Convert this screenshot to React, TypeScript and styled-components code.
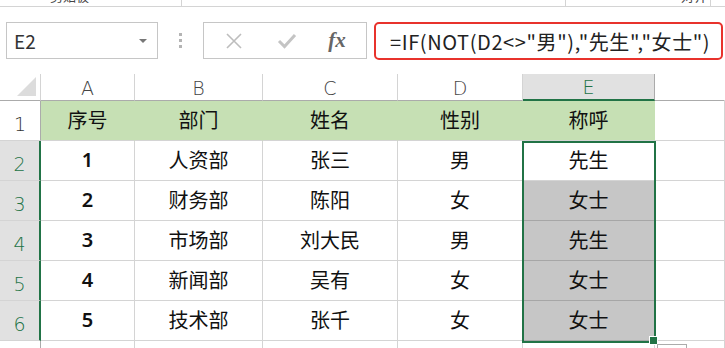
import React from 'react';
import styled, { createGlobalStyle } from 'styled-components';

const Global = createGlobalStyle`
  html, body { margin: 0; padding: 0; background: #fff; }
  body { font-family: "Noto Sans CJK SC", "Noto Sans", sans-serif; }
  #root { width: 725px; height: 348px; overflow: hidden; }
`;

const Page = styled.div`
  width: 725px;
  height: 348px;
  overflow: hidden;
  display: flex;
  flex-direction: column;
  background: #fff;
`;

const RibbonEdge = styled.div`
  height: 6px;
  border-bottom: 1px solid #d4d4d4;
  display: flex;
  overflow: hidden;
  flex-shrink: 0;
`;

const RibbonGroup = styled.div<{ $w: number; $pad: number }>`
  width: ${p => p.$w}px;
  flex-shrink: 0;
  border-right: 1px solid #d4d4d4;
  padding-left: ${p => p.$pad}px;
  box-sizing: border-box;
  overflow: hidden;
`;

const RibbonLabel = styled.div`
  font-size: 13px;
  line-height: 16px;
  margin-top: -12px;
  color: #444;
  white-space: nowrap;
`;

const FormulaBar = styled.div`
  display: flex;
  align-items: flex-start;
  padding-top: 15px;
  height: 38px;
  flex-shrink: 0;
`;

const NameBox = styled.div`
  margin-left: 6px;
  width: 152px;
  height: 37px;
  box-sizing: border-box;
  border: 1px solid #c6c6c6;
  display: flex;
  align-items: center;
  justify-content: space-between;
  padding: 0 10px 0 7px;
  font-size: 19px;
  color: #333;
`;

const DropArrow = styled.span`
  width: 0;
  height: 0;
  border-left: 4px solid transparent;
  border-right: 4px solid transparent;
  border-top: 4px solid #777;
`;

const Grip = styled.div`
  width: 45px;
  height: 37px;
  display: flex;
  flex-direction: column;
  align-items: center;
  justify-content: center;
  gap: 3px;
`;

const GripDot = styled.span`
  width: 3px;
  height: 3px;
  background: #b4b4b4;
`;

const FuncButtons = styled.div`
  width: 164px;
  height: 37px;
  box-sizing: border-box;
  border: 1px solid #c6c6c6;
  display: grid;
  grid-template-columns: 60px 46px 1fr;
  align-items: center;
  justify-items: center;
`;

const FxText = styled.span`
  font-family: "Liberation Serif", "DejaVu Serif", serif;
  font-style: italic;
  font-weight: bold;
  font-size: 21px;
  color: #666;
  margin-right: 2px;
`;

const FormulaInput = styled.div`
  margin-left: 7px;
  width: 349px;
  height: 38px;
  box-sizing: border-box;
  border: 2px solid #e8322c;
  border-radius: 5px;
  display: flex;
  align-items: center;
  padding-left: 14px;
  font-size: 20px;
  letter-spacing: 0.6px;
  color: #222;
  white-space: nowrap;
  overflow: hidden;
`;

const Sheet = styled.div`
  margin-top: 14px;
  position: relative;
  display: grid;
  grid-template-columns: 41px 94px 128px 135px 125px 132px 70px;
  grid-template-rows: 27px repeat(6, 40px) 20px;
`;

const Corner = styled.div`
  box-sizing: border-box;
  border-right: 1px solid #d4d4d4;
  border-bottom: 1px solid #ababab;
  display: flex;
  align-items: flex-end;
  justify-content: flex-end;
  padding: 0 4px 4px 0;
`;

const CornerTriangle = styled.span`
  width: 0;
  height: 0;
  border-left: 19px solid transparent;
  border-bottom: 19px solid #dcdcdc;
`;

const ColHead = styled.div<{ $sel?: boolean; $last?: boolean }>`
  box-sizing: border-box;
  background: ${p => (p.$sel ? '#e1e1e1' : '#fff')};
  color: ${p => (p.$sel ? '#217346' : '#444')};
  border-right: 1px solid ${p => (p.$sel ? '#ababab' : p.$last ? 'transparent' : '#d4d4d4')};
  border-bottom: ${p => (p.$sel ? '2px solid #217346' : '1px solid #ababab')};
  display: flex;
  align-items: center;
  justify-content: center;
  font-family: "DejaVu Sans", sans-serif;
  font-weight: 200;
  font-size: 19px;
  padding-top: 1px;
`;

const RowHead = styled.div<{ $sel?: boolean }>`
  box-sizing: border-box;
  background: ${p => (p.$sel ? '#e1e1e1' : '#fff')};
  color: ${p => (p.$sel ? '#217346' : '#333')};
  border-right: ${p => (p.$sel ? '2px solid #217346' : '1px solid #ababab')};
  border-bottom: 1px solid #d4d4d4;
  display: flex;
  align-items: flex-end;
  justify-content: center;
  padding-bottom: 4px;
  font-family: "DejaVu Sans", sans-serif;
  font-weight: 200;
  font-size: 19px;
  line-height: 24px;
`;

const Cell = styled.div<{ $fill?: 'header' | 'shade' | 'none'; $num?: boolean }>`
  box-sizing: border-box;
  background: ${p => (p.$fill === 'header' ? '#c6e0b4' : p.$fill === 'shade' ? '#c6c6c6' : '#fff')};
  border-right: 1px solid ${p => (p.$fill === 'header' ? '#c6e0b4' : p.$fill === 'shade' ? '#c6c6c6' : '#d4d4d4')};
  border-bottom: 1px solid ${p => (p.$fill === 'shade' ? '#a6a6a6' : '#d4d4d4')};
  display: flex;
  align-items: center;
  justify-content: center;
  font-family: ${p => (p.$num ? '"Noto Sans", "Noto Sans CJK SC", sans-serif' : '"Noto Sans CJK SC", "Noto Sans", sans-serif')};
  font-size: 20px;
  font-weight: ${p => (p.$num ? 600 : 400)};
  color: #111;
  padding-bottom: 2px;
`;

const Selection = styled.div`
  position: absolute;
  left: 522px;
  top: 67px;
  width: 134px;
  height: 202px;
  box-sizing: border-box;
  border: 2px solid #217346;
  pointer-events: none;
`;

const FillHandle = styled.div`
  position: absolute;
  left: 649px;
  top: 262px;
  width: 9px;
  height: 9px;
  box-sizing: border-box;
  background: #217346;
  border: 1px solid #fff;
`;

const PasteOptions = styled.div`
  position: absolute;
  left: 657px;
  top: 270px;
  width: 30px;
  height: 20px;
  box-sizing: border-box;
  border: 1px solid #ababab;
  background: #fff;
`;

const columns = ['A', 'B', 'C', 'D', 'E'];
const header = ['序号', '部门', '姓名', '性别', '称呼'];
const rows = [
  ['1', '人资部', '张三', '男', '先生'],
  ['2', '财务部', '陈阳', '女', '女士'],
  ['3', '市场部', '刘大民', '男', '先生'],
  ['4', '新闻部', '吴有', '女', '女士'],
  ['5', '技术部', '张千', '女', '女士'],
];

const XIcon = () => (
  <svg width="18" height="18" viewBox="0 0 18 18">
    <path d="M2 2 L16 16 M16 2 L2 16" stroke="#bdbdbd" strokeWidth="1.6" fill="none" />
  </svg>
);

const CheckIcon = () => (
  <svg width="20" height="18" viewBox="0 0 20 18">
    <path d="M2 9 L7.5 14.5 L18 3" stroke="#c4c4c4" strokeWidth="3" fill="none" />
  </svg>
);

export default function App() {
  return (
    <Page>
      <Global />
      <RibbonEdge>
        <RibbonGroup $w={182} $pad={50}>
          <RibbonLabel>剪贴板</RibbonLabel>
        </RibbonGroup>
        <RibbonGroup $w={384} $pad={0}>
          <RibbonLabel> </RibbonLabel>
        </RibbonGroup>
        <RibbonGroup $w={145} $pad={115}>
          <RibbonLabel>对齐</RibbonLabel>
        </RibbonGroup>
      </RibbonEdge>
      <FormulaBar>
        <NameBox>
          <span>E2</span>
          <DropArrow />
        </NameBox>
        <Grip>
          <GripDot />
          <GripDot />
          <GripDot />
        </Grip>
        <FuncButtons>
          <XIcon />
          <CheckIcon />
          <FxText>fx</FxText>
        </FuncButtons>
        <FormulaInput>=IF(NOT(D2&lt;&gt;"男"),"先生","女士")</FormulaInput>
      </FormulaBar>
      <Sheet>
        <Corner>
          <CornerTriangle />
        </Corner>
        {columns.map(c => (
          <ColHead key={c} $sel={c === 'E'}>
            {c}
          </ColHead>
        ))}
        <ColHead $last />

        <RowHead>1</RowHead>
        {header.map(h => (
          <Cell key={h} $fill="header">
            {h}
          </Cell>
        ))}
        <Cell />

        {rows.map((r, i) => (
          <React.Fragment key={i}>
            <RowHead $sel>{i + 2}</RowHead>
            {r.map((v, j) => (
              <Cell key={j} $num={j === 0} $fill={j === 4 && i > 0 ? 'shade' : 'none'}>
                {v}
              </Cell>
            ))}
            <Cell />
          </React.Fragment>
        ))}

        <RowHead />
        {columns.map(c => (
          <Cell key={c} />
        ))}
        <Cell />

        <Selection />
        <FillHandle />
        <PasteOptions />
      </Sheet>
    </Page>
  );
}
